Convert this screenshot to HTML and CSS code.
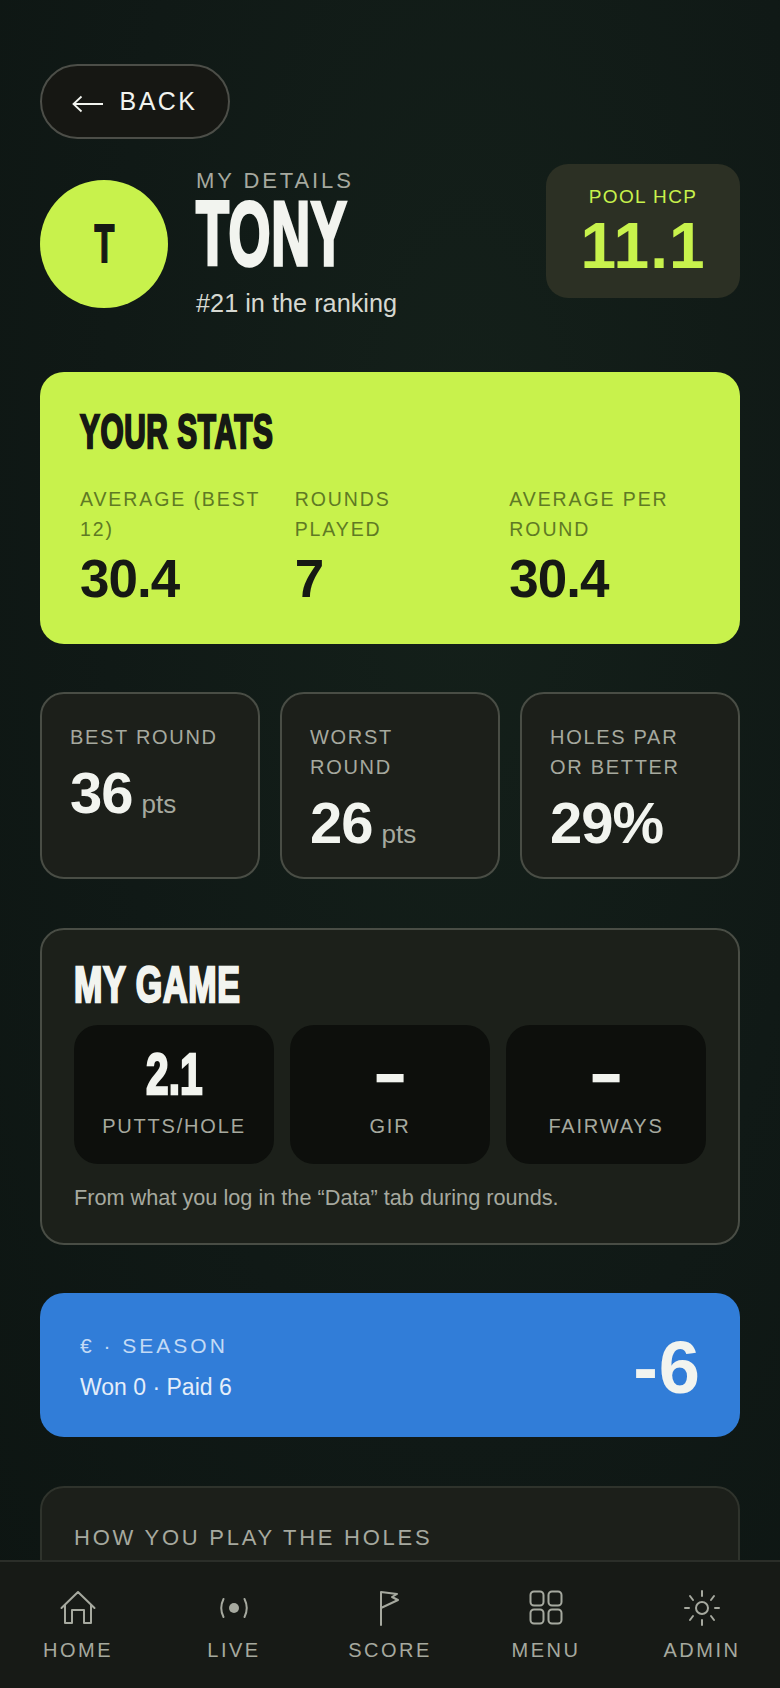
FILE: index.html
```html
<!DOCTYPE html>
<html lang="en">
<head>
  <meta charset="UTF-8">
  <meta name="viewport" content="width=device-width, initial-scale=1.0">
  <title>My details</title>
  <link rel="stylesheet" href="styles.css">
</head>
<body>
  <main class="page">
    <button class="back-btn">
      <svg class="back-arrow" viewBox="0 0 32 18"><path d="M31 9H1.500M9.500 1.500 1.500 9l8 7.500"/></svg>
      BACK
    </button>

    <!-- Player header -->
    <header class="player">
      <div class="avatar"><span class="display">T</span></div>
      <div class="player-info">
        <div class="eyebrow">MY DETAILS</div>
        <h1 class="player-name"><span class="display">TONY</span></h1>
        <div class="player-rank">#21 in the ranking</div>
      </div>
      <div class="hcp">
        <div class="hcp-label">POOL HCP</div>
        <div class="hcp-value">11.1</div>
      </div>
    </header>

    <!-- Lime summary card -->
    <section class="stats-card">
      <h2 class="stats-title"><span class="display">YOUR STATS</span></h2>
      <div class="stats-grid">
        <div>
          <div class="stats-label">AVERAGE (BEST 12)</div>
          <div class="stats-value">30.4</div>
        </div>
        <div>
          <div class="stats-label">ROUNDS PLAYED</div>
          <div class="stats-value">7</div>
        </div>
        <div>
          <div class="stats-label">AVERAGE PER ROUND</div>
          <div class="stats-value">30.4</div>
        </div>
      </div>
    </section>

    <section class="mini-cards">
      <div class="mini-card">
        <div class="mini-label">BEST ROUND</div>
        <div class="mini-value">36<small>pts</small></div>
      </div>
      <div class="mini-card">
        <div class="mini-label">WORST ROUND</div>
        <div class="mini-value">26<small>pts</small></div>
      </div>
      <div class="mini-card">
        <div class="mini-label">HOLES PAR OR BETTER</div>
        <div class="mini-value">29%</div>
      </div>
    </section>

    <section class="game-card">
      <h2 class="game-title"><span class="display">MY GAME</span></h2>
      <div class="game-tiles">
        <div class="tile">
          <div class="tile-value"><span class="display">2.1</span></div>
          <div class="tile-label">PUTTS/HOLE</div>
        </div>
        <div class="tile">
          <div class="tile-value"><span class="display dash">&ndash;</span></div>
          <div class="tile-label">GIR</div>
        </div>
        <div class="tile">
          <div class="tile-value"><span class="display dash">&ndash;</span></div>
          <div class="tile-label">FAIRWAYS</div>
        </div>
      </div>
      <p class="game-note">From what you log in the &ldquo;Data&rdquo; tab during rounds.</p>
    </section>

    <section class="season-card">
      <div>
        <div class="season-label">&euro; &middot; SEASON</div>
        <div class="season-detail">Won 0 &middot; Paid 6</div>
      </div>
      <div class="season-total">-6</div>
    </section>

    <section class="holes-card">
      <div class="holes-title">HOW YOU PLAY THE HOLES</div>
    </section>
  </main>

  <!-- Bottom tab bar -->
  <nav class="tabbar">
    <a class="tab">
      <svg viewBox="0 0 36 36"><path d="M1.500 18 18 2l16.500 16M5 15v18h7V20h12v13h7V15M5 33h7M24 33h7"/></svg>
      HOME
    </a>
    <a class="tab">
      <svg viewBox="0 0 36 36"><circle class="solid" cx="18" cy="18" r="5"/><path d="M7.500 9c-3 6-3 12 0 18M28.500 9c3 6 3 12 0 18"/></svg>
      LIVE
    </a>
    <a class="tab">
      <svg viewBox="0 0 36 36"><path d="M9 35V2l16 2-5 3 6 3-17 8"/></svg>
      SCORE
    </a>
    <a class="tab">
      <svg viewBox="0 0 36 36"><rect x="2.500" y="1.500" width="13" height="14" rx="3.500"/><rect x="20.500" y="1.500" width="13" height="14" rx="3.500"/><rect x="2.500" y="19.500" width="13" height="14" rx="3.500"/><rect x="20.500" y="19.500" width="13" height="14" rx="3.500"/></svg>
      MENU
    </a>
    <a class="tab">
      <svg viewBox="0 0 36 36"><circle cx="18" cy="18" r="6"/><path d="M18 1v5M18 30v5M1 18h4M31 18h4M6 6l3 4M30 6l-3 4M6 30l3-4M30 30l-3-4"/></svg>
      ADMIN
    </a>
  </nav>
</body>
</html>
```

FILE: styles.css
```css
:root {
  --lime: #c8f24c;
  --ink: #161914;
  --text: #f2f4ef;
  --muted: #a6a99f;
  --panel: #1c1f1a;
  --border: #494d45;
}
* {
  margin: 0;
  padding: 0;
  box-sizing: border-box;
}
html, body {
  height: 100%;
  overflow: hidden;
}
body {
  font-family: "Liberation Sans", Arial, sans-serif;
  color: var(--text);
  background: radial-gradient(ellipse at 60% 30%, #14201a 0%, #101916 55%, #0d1512 100%);
}
.page {
  padding: 64px 40px 0;
}

/* Heavy condensed headline face, squeezed out of the narrow family */
.display {
  display: inline-block;
  font-family: "Liberation Sans Narrow", "Liberation Sans", sans-serif;
  font-weight: 700;
  transform: scaleX(0.6);
  transform-origin: left center;
  -webkit-text-stroke: 2.5px currentColor;
}

.back-btn {
  display: flex;
  align-items: center;
  justify-content: center;
  gap: 15px;
  width: 190px;
  height: 75px;
  border-radius: 38px;
  border: 2px solid #4c4e48;
  background: #161713;
  color: var(--text);
  font-family: inherit;
  font-size: 25px;
  letter-spacing: 2.5px;
}
.back-arrow {
  width: 32px;
  height: 18px;
  margin-top: 4px;
  fill: none;
  stroke: var(--text);
  stroke-width: 1.8;
}

.player {
  display: flex;
  align-items: flex-start;
  margin-top: 25px;
}
.avatar {
  flex: none;
  width: 128px;
  height: 128px;
  margin-top: 16px;
  border-radius: 50%;
  background: var(--lime);
  color: var(--ink);
  display: flex;
  align-items: center;
  justify-content: center;
  font-size: 54px;
  padding-bottom: 3px;
}
.avatar .display {
  transform-origin: center;
  -webkit-text-stroke-width: 2px;
}
.player-info {
  flex: 1;
  margin-left: 28px;
}
.eyebrow {
  font-size: 22px;
  line-height: 22px;
  letter-spacing: 2.9px;
  color: var(--muted);
  margin-top: 6px;
}
.player-name {
  font-size: 90px;
  line-height: 84px;
  letter-spacing: 1px;
  white-space: nowrap;
}
.player-name .display {
  -webkit-text-stroke-width: 3.5px;
}
.player-rank {
  font-size: 25.3px;
  line-height: 32px;
  margin-top: 11px;
  color: #d6d8d1;
}
.hcp {
  flex: none;
  width: 194px;
  height: 134px;
  border-radius: 22px;
  background: #2c3024;
  text-align: center;
  padding-top: 21px;
}
.hcp-label {
  font-size: 19px;
  line-height: 24px;
  letter-spacing: 1.4px;
  color: var(--lime);
}
.hcp-value {
  font-size: 64px;
  font-weight: 700;
  line-height: 68px;
  letter-spacing: 1px;
  margin-top: 3px;
  color: var(--lime);
}

.stats-card {
  margin-top: 53px;
  height: 272px;
  border-radius: 24px;
  background: var(--lime);
  color: var(--ink);
  padding: 32px 40px;
}
.stats-title {
  font-size: 48px;
  line-height: 56px;
  letter-spacing: 1px;
  white-space: nowrap;
}
.stats-title .display {
  transform: scaleX(0.62);
}
.stats-grid {
  display: grid;
  grid-template-columns: repeat(3, 1fr);
  gap: 24px;
  margin-top: 24px;
}
.stats-label {
  font-size: 19.5px;
  line-height: 30px;
  letter-spacing: 1.9px;
  padding-right: 6px;
  color: #5f7a24;
}
.stats-value {
  font-size: 53px;
  font-weight: 700;
  line-height: 56px;
  letter-spacing: -1px;
  margin-top: 7px;
}

.mini-cards {
  display: grid;
  grid-template-columns: repeat(3, 1fr);
  gap: 20px;
  margin-top: 48px;
}
.mini-card {
  height: 187px;
  border-radius: 24px;
  border: 2px solid var(--border);
  background: var(--panel);
  padding: 28px 28px 0;
}
.mini-label {
  font-size: 20px;
  line-height: 30px;
  letter-spacing: 1.7px;
  color: var(--muted);
}
.mini-value {
  font-size: 58px;
  font-weight: 700;
  line-height: 60px;
  letter-spacing: -1px;
  margin-top: 11px;
}
.mini-value small {
  font-size: 26px;
  font-weight: 400;
  letter-spacing: 0;
  color: var(--muted);
  margin-left: 9px;
}

.game-card {
  margin-top: 49px;
  height: 317px;
  border-radius: 24px;
  border: 2px solid var(--border);
  background: #1c201a;
  padding: 27px 32px 0;
}
.game-title {
  font-size: 50px;
  line-height: 56px;
  letter-spacing: 1px;
  white-space: nowrap;
}
.game-title .display {
  transform: scaleX(0.68);
}
.game-tiles {
  display: grid;
  grid-template-columns: repeat(3, 1fr);
  gap: 16px;
  margin-top: 12px;
}
.tile {
  height: 139px;
  border-radius: 24px;
  background: #0d0f0c;
  text-align: center;
  padding-top: 17px;
}
.tile-value {
  font-size: 58px;
  line-height: 64px;
  height: 64px;
  margin-bottom: 8px;
}
.tile-value .display {
  transform: scaleX(0.7);
  transform-origin: center;
}
.tile-value .dash {
  transform: scaleX(0.86);
}
.tile-label {
  font-size: 20px;
  line-height: 24px;
  letter-spacing: 1.8px;
  color: var(--muted);
  margin-top: 4px;
}
.game-note {
  font-size: 21.7px;
  line-height: 30px;
  color: var(--muted);
  margin-top: 19px;
}

.season-card {
  display: flex;
  align-items: center;
  justify-content: space-between;
  margin-top: 48px;
  height: 144px;
  border-radius: 24px;
  background: #317dd8;
  padding: 4px 40px 0;
}
.season-label {
  font-size: 21px;
  line-height: 30px;
  letter-spacing: 3px;
  color: #c3daf5;
}
.season-detail {
  font-size: 23px;
  line-height: 32px;
  margin-top: 10px;
  color: #e4eefa;
}
.season-total {
  font-size: 74px;
  font-weight: 700;
  letter-spacing: 1px;
  margin-right: -1px;
}

.holes-card {
  margin-top: 49px;
  height: 300px;
  border-radius: 24px;
  border: 2px solid #2f332c;
  background: var(--panel);
  padding: 35px 32px;
}
.holes-title {
  font-size: 22px;
  line-height: 30px;
  letter-spacing: 2.75px;
  color: var(--muted);
}

.tabbar {
  position: fixed;
  left: 0;
  right: 0;
  bottom: 0;
  height: 128px;
  display: grid;
  grid-template-columns: repeat(5, 1fr);
  background: #171a16;
  border-top: 2px solid #2b2e29;
}
.tab {
  display: flex;
  flex-direction: column;
  align-items: center;
  padding-top: 28px;
  font-size: 20px;
  line-height: 24px;
  letter-spacing: 2.5px;
  color: var(--muted);
}
.tab svg {
  width: 36px;
  height: 36px;
  margin-bottom: 12px;
  fill: none;
  stroke: var(--muted);
  stroke-width: 2;
  stroke-linecap: round;
  stroke-linejoin: round;
}
.tab svg .solid {
  fill: var(--muted);
  stroke: none;
}
```
